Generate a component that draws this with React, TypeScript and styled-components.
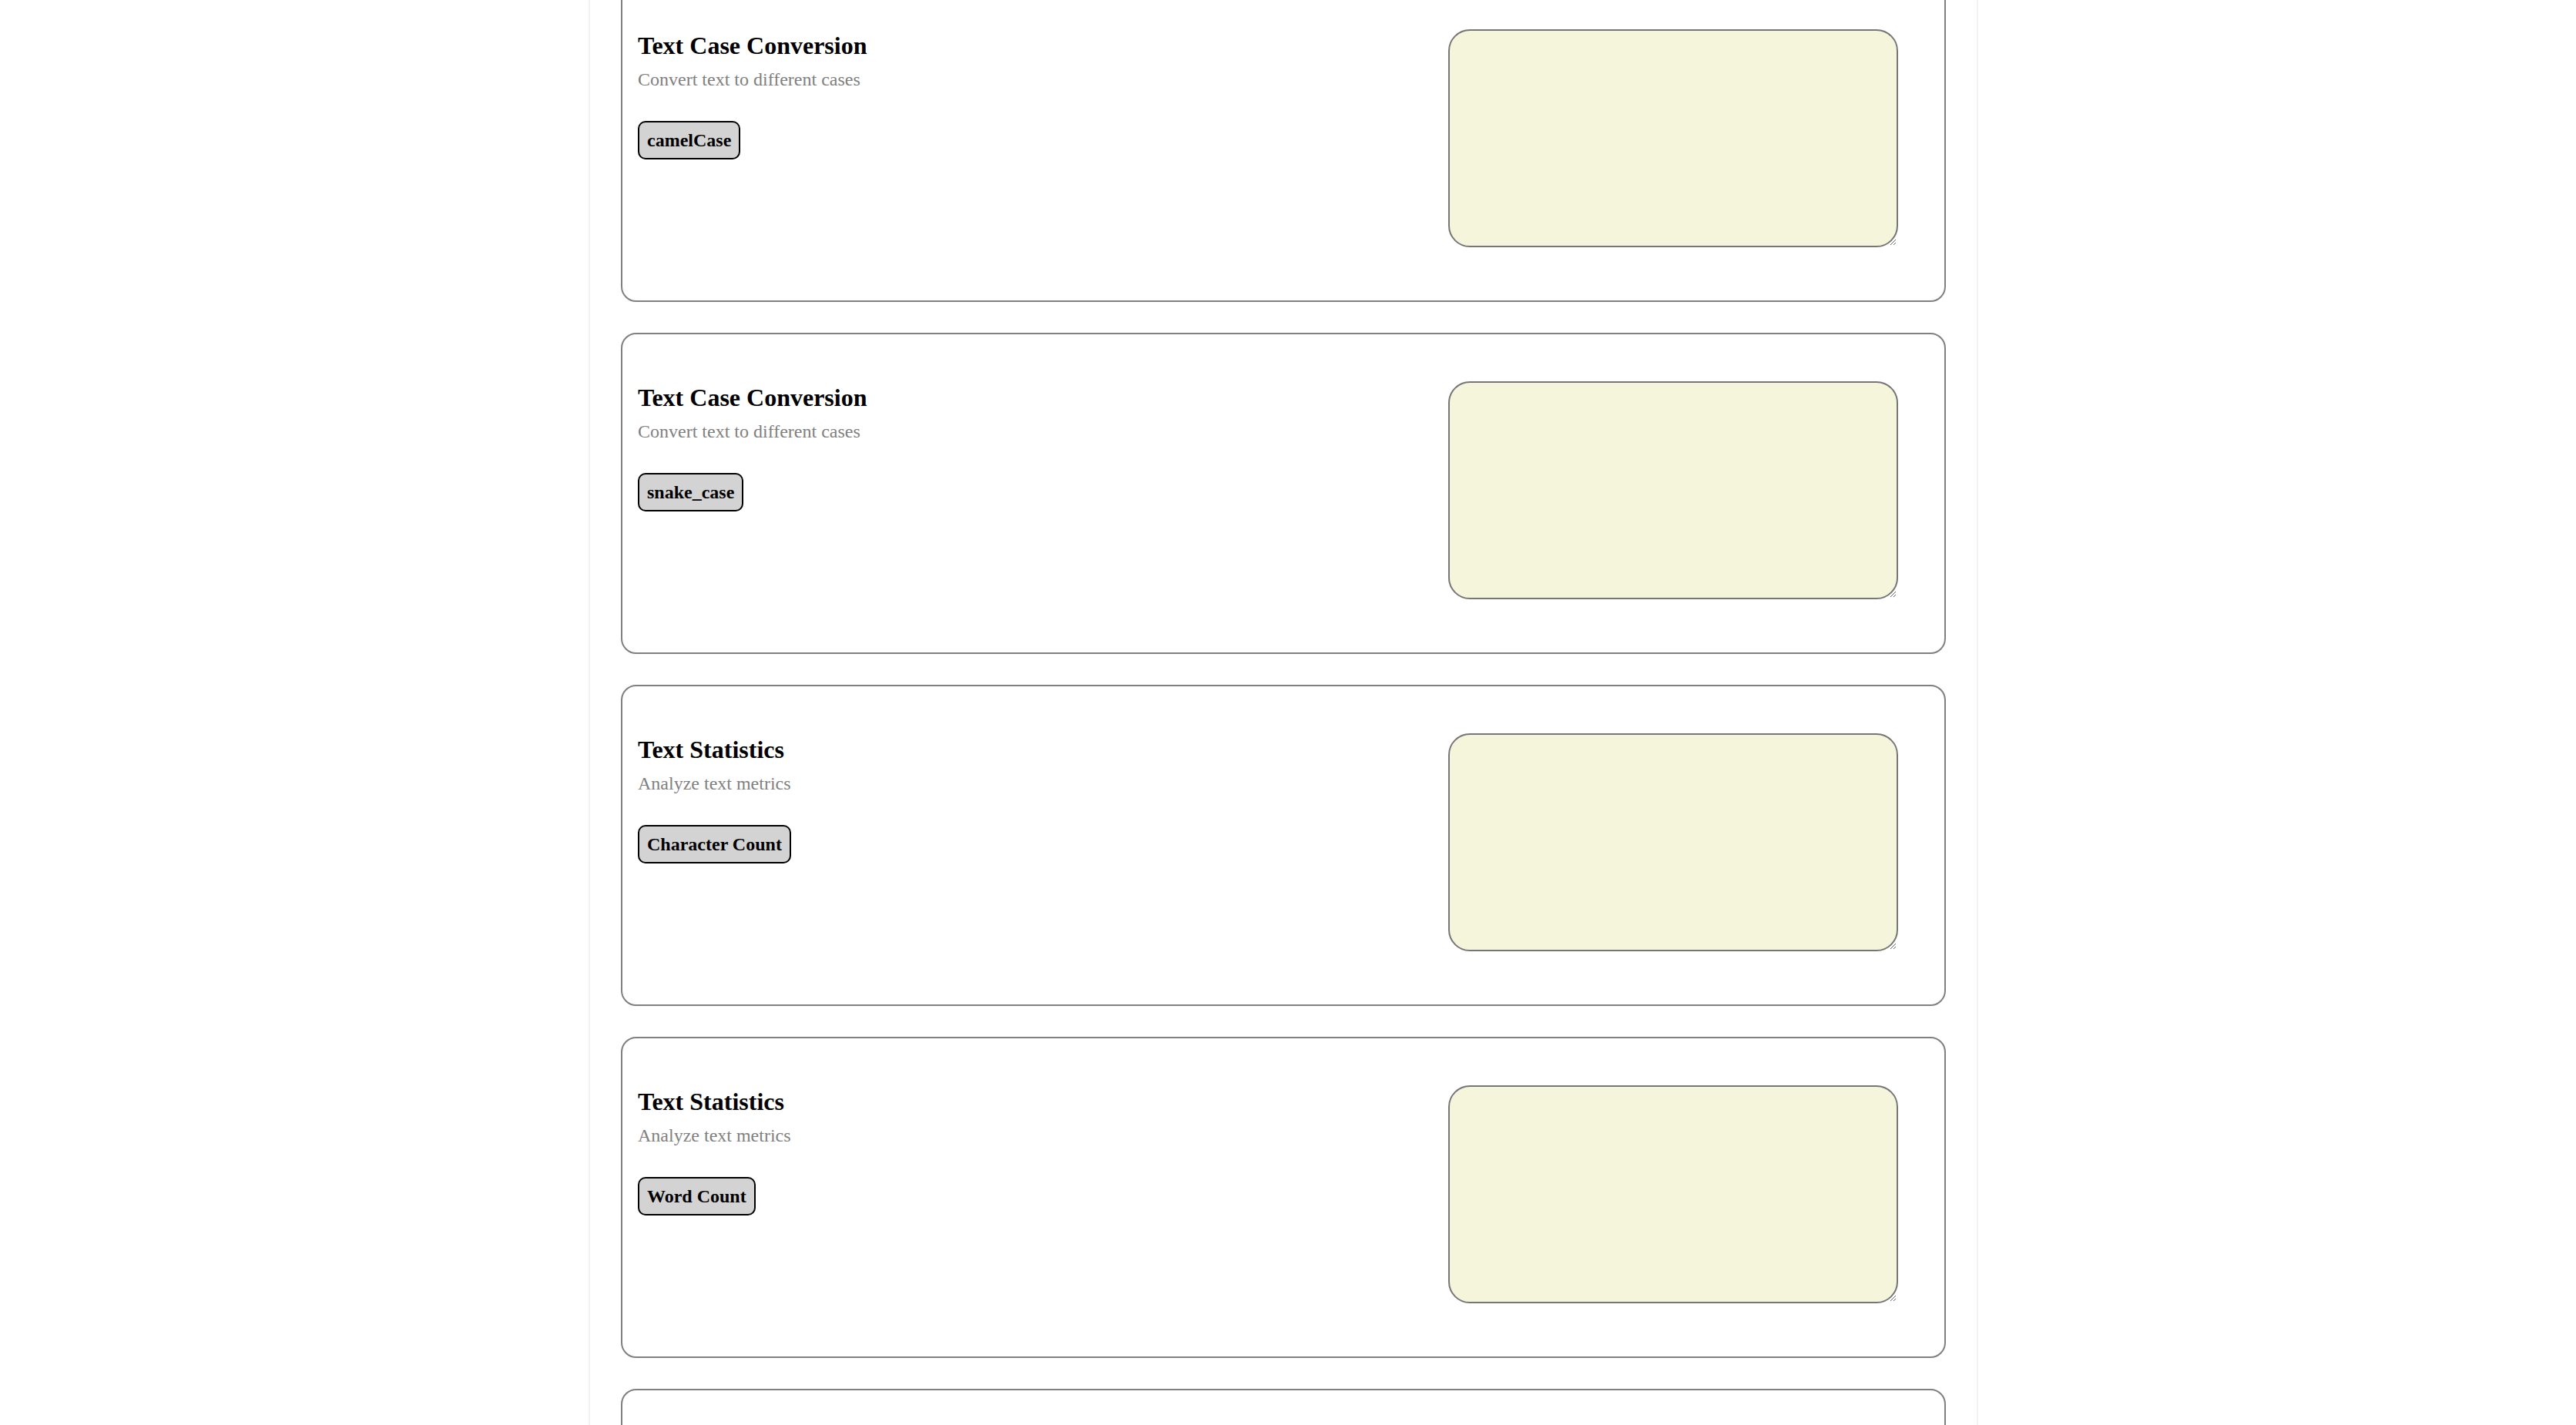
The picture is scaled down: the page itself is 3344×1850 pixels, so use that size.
import React from "react";
import styled, { createGlobalStyle } from "styled-components";

const GlobalStyle = createGlobalStyle`
  html, body {
    margin: 0;
    padding: 0;
    background: #ffffff;
    font-family: "Liberation Serif", "Times New Roman", serif;
    overflow: hidden;
  }
`;

const Page = styled.div`
  padding-right: 12px;
  min-height: 1850px;
`;

const Container = styled.main`
  width: 1804px;
  box-sizing: border-box;
  margin: -25px auto 0;
  padding: 0 40px;
  border-left: 2px solid #f3f3f3;
  border-right: 2px solid #f3f3f3;
  min-height: 1900px;
  display: flex;
  flex-direction: column;
  gap: 40px;
`;

const Card = styled.section`
  border: 2px solid #808080;
  border-radius: 20px;
  padding: 20px;
  display: flex;
  justify-content: space-between;
  align-items: flex-start;
  background: #ffffff;
`;

const Info = styled.div`
  margin: 44px 0 0 0;
  display: flex;
  flex-direction: column;
  align-items: flex-start;
`;

const Title = styled.h3`
  margin: 0;
  font-size: 32px;
  font-weight: bold;
  line-height: 37px;
  color: #000;
`;

const Subtitle = styled.p`
  margin: 11px 0 0;
  font-size: 24px;
  line-height: 28px;
  color: #808080;
`;

const ActionButton = styled.button`
  margin-top: 40px;
  font-family: "Liberation Serif", "Times New Roman", serif;
  font-size: 24px;
  font-weight: bold;
  line-height: 28px;
  padding: 9px 10px;
  border: 2px solid #000;
  border-radius: 10px;
  background: #d3d3d3;
  color: #000;
  cursor: pointer;
`;

const Output = styled.textarea`
  display: block;
  box-sizing: border-box;
  width: 584px;
  height: 283px;
  margin: 41px 40px 49px;
  border: 2px solid #767676;
  border-radius: 28px;
  background: #f5f5dc;
  font-family: "Liberation Mono", monospace;
  font-size: 26px;
  padding: 4px;
`;

type Tool = { title: string; desc: string; action: string };

const tools: Tool[] = [
  { title: "Text Case Conversion", desc: "Convert text to different cases", action: "camelCase" },
  { title: "Text Case Conversion", desc: "Convert text to different cases", action: "snake_case" },
  { title: "Text Statistics", desc: "Analyze text metrics", action: "Character Count" },
  { title: "Text Statistics", desc: "Analyze text metrics", action: "Word Count" },
  { title: "Text Statistics", desc: "Analyze text metrics", action: "Line Count" },
];

export default function App() {
  return (
    <Page>
      <GlobalStyle />
      <Container>
        {tools.map((t, i) => (
          <Card key={i}>
            <Info>
              <Title>{t.title}</Title>
              <Subtitle>{t.desc}</Subtitle>
              <ActionButton>{t.action}</ActionButton>
            </Info>
            <Output readOnly />
          </Card>
        ))}
      </Container>
    </Page>
  );
}
